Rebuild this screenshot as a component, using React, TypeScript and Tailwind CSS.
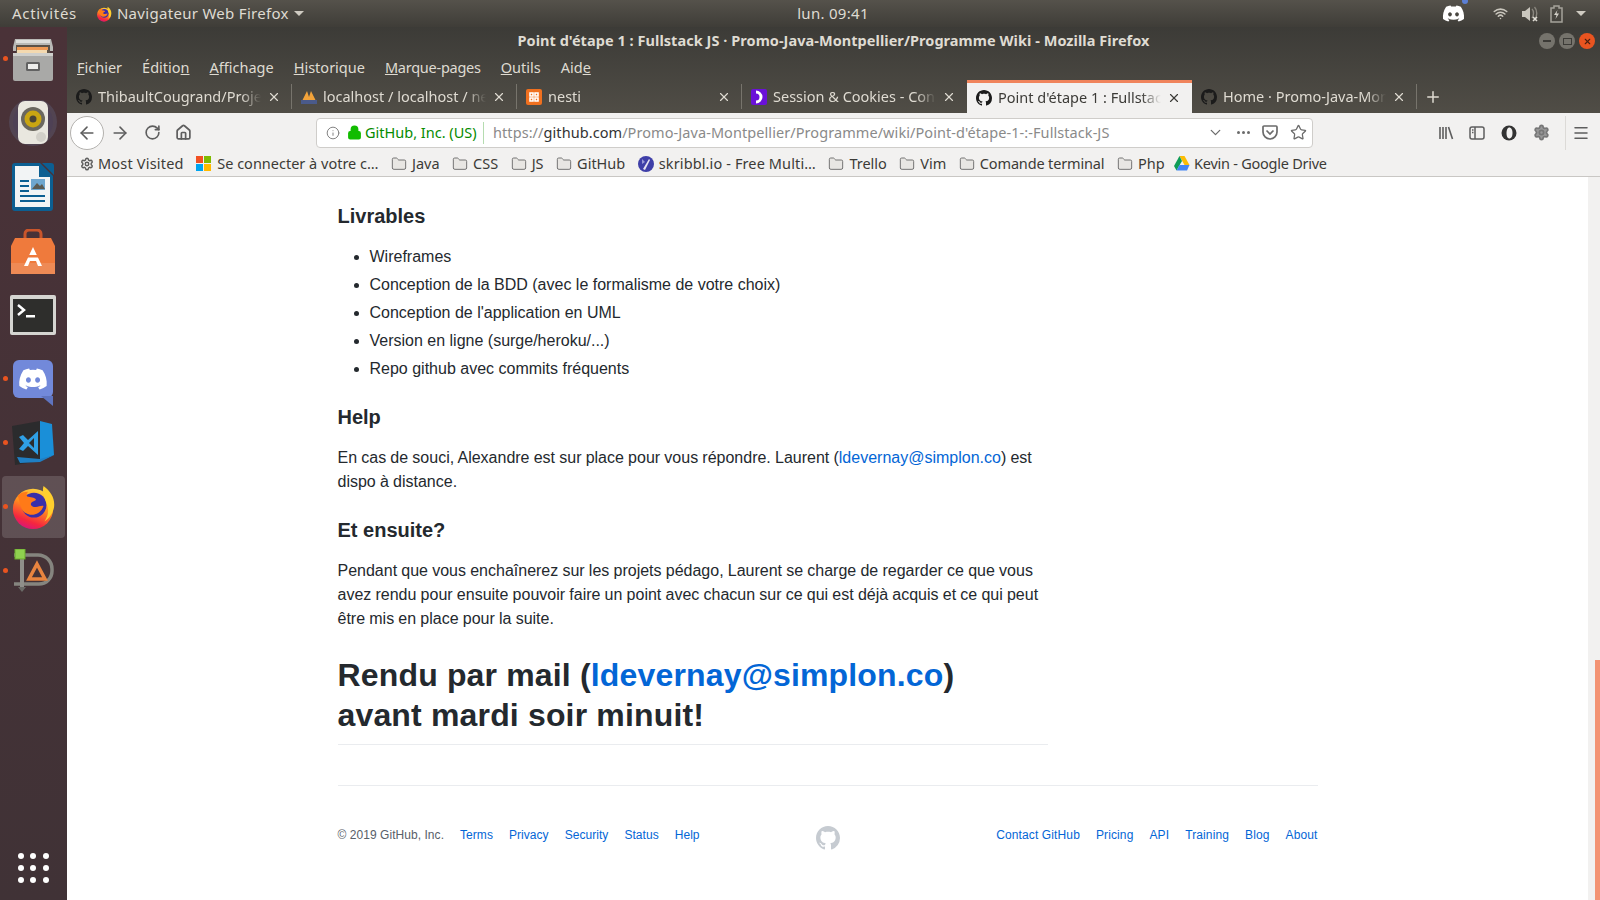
import { ArrowLeft, ArrowRight, ChevronDown, Folder, Home, Info, Lock, Menu, Plus, RotateCw, Settings, Star, Wifi, X } from "lucide-react";
import { FaDiscord } from "react-icons/fa";

const GITHUB_MARK =
  "M8 0C3.58 0 0 3.58 0 8c0 3.54 2.29 6.53 5.47 7.59.4.07.55-.17.55-.38 0-.19-.01-.82-.01-1.49-2.01.37-2.53-.49-2.69-.94-.09-.23-.48-.94-.82-1.13-.28-.15-.68-.52-.01-.53.63-.01 1.08.58 1.23.82.72 1.21 1.87.87 2.33.66.07-.52.28-.87.51-1.07-1.78-.2-3.64-.89-3.64-3.95 0-.87.31-1.59.82-2.15-.08-.2-.36-1.02.08-2.12 0 0 .67-.21 2.2.82.64-.18 1.32-.27 2-.27.68 0 1.36.09 2 .27 1.53-1.04 2.2-.82 2.2-.82.44 1.1.16 1.92.08 2.12.51.56.82 1.27.82 2.15 0 3.07-1.87 3.75-3.65 3.95.29.25.54.73.54 1.48 0 1.07-.01 1.93-.01 2.2 0 .21.15.46.55.38A8.013 8.013 0 0016 8c0-4.42-3.58-8-8-8z";

function GithubMark({ className }: { className: string }) {
  return (
    <svg viewBox="0 0 16 16" className={className} fill="currentColor">
      <path d={GITHUB_MARK} />
    </svg>
  );
}

function FirefoxIcon({ size }: { size: number }) {
  return (
    <svg width={size} height={size} viewBox="0 0 48 48">
      <defs>
        <linearGradient id={`ff${size}`} x1="0.7" y1="0" x2="0.3" y2="1">
          <stop offset="0" stopColor="#ffd53d" />
          <stop offset="0.45" stopColor="#ff8a1f" />
          <stop offset="0.8" stopColor="#f5263f" />
          <stop offset="1" stopColor="#d5157f" />
        </linearGradient>
      </defs>
      <circle cx="24" cy="26" r="21" fill={`url(#ff${size})`} />
      <circle cx="25" cy="22" r="13" fill="#3a2fa8" />
      <path d="M35 2c8 6 12 13 11 22-1 6-5 12-10 15 4-6 5-12 2-19-2-6-5-11-3-18z" fill="#ffcf2e" />
      <path d="M8 12c3-3 7-4 11-4-2 2-2 4-1 5 3 1 8 1 9 3 0 2-4 2-5 4-1 2 1 4 5 4 3 0 6-2 8-1-2 6-8 10-14 9-5-1-9-4-10-9-1-4-2-8-3-11z" fill="#ff7a18" />
    </svg>
  );
}

function FilesIcon() {
  return (
    <svg width="44" height="44" viewBox="0 0 44 44">
      <path d="M4 2h36l2 8v4H2v-4z" fill="#b9b9b6" />
      <path d="M5 3h34v3H5z" fill="#dededb" />
      <rect x="5" y="8" width="34" height="9" fill="#5b5147" />
      <rect x="6" y="10" width="31" height="3" fill="#ef9a55" />
      <rect x="6" y="13" width="30" height="3" fill="#f3d9b0" />
      <path d="M2 16h40v26a2 2 0 0 1-2 2H4a2 2 0 0 1-2-2z" fill="#a9a9a7" />
      <path d="M2 16h40v3H2z" fill="#cfcfcc" />
      <rect x="15" y="25" width="14" height="9" rx="1.5" fill="#626262" />
      <rect x="17" y="27" width="10" height="5" fill="#eeeeec" />
    </svg>
  );
}

function SpeakerIcon() {
  return (
    <svg width="50" height="46" viewBox="0 0 50 46">
      <circle cx="25" cy="22" r="24" fill="#5a5468" opacity="0.55" />
      <circle cx="25" cy="22" r="20" fill="#4c3f58" opacity="0.6" />
      <rect x="10" y="1" width="30" height="43" rx="7" fill="#e9e7df" />
      <circle cx="25" cy="19" r="12" fill="#6a675f" />
      <circle cx="25" cy="19" r="8.5" fill="#c9a512" />
      <circle cx="25" cy="19" r="3.5" fill="#4a4436" />
      <circle cx="33" cy="37" r="5" fill="#d2d0c9" />
    </svg>
  );
}

function WriterIcon() {
  return (
    <svg width="42" height="48" viewBox="0 0 42 48">
      <path d="M3 0h25l13 13v32a3 3 0 0 1-3 3H3a3 3 0 0 1-3-3V3a3 3 0 0 1 3-3z" fill="#0c5f92" />
      <path d="M3 3h24v11h11v30H3z" fill="#f2f4f5" />
      <path d="M30 0h9a3 3 0 0 1 3 3v9z" fill="#0c5f92" />
      <path d="M8 17h9v2H8zM8 22h9v2H8zM8 27h9v2H8zM8 32h25v2H8zM8 37h25v2H8z" fill="#0c5f92" />
      <rect x="19" y="16" width="14" height="11" fill="#6ea7cf" />
      <path d="M20 26l5-6 3 3 2-2 3 5z" fill="#5b5b52" />
    </svg>
  );
}

function StoreIcon() {
  return (
    <svg width="44" height="45" viewBox="0 0 44 45">
      <path d="M14 10V5a4 4 0 0 1 4-4h8a4 4 0 0 1 4 4v5" fill="none" stroke="#c9552b" strokeWidth="3" />
      <path d="M4 9h36l4 8v28H0V17z" fill="#ef7a3c" />
      <path d="M0 34h44v11H0z" fill="#ee8a55" />
      <path d="M22 18l-9 19h4l2-5h6l2 5h4z" fill="#fff" />
      <rect x="12" y="26" width="20" height="2.5" fill="#ef7a3c" />
    </svg>
  );
}

function TerminalIcon() {
  return (
    <svg width="46" height="40" viewBox="0 0 46 40">
      <rect width="46" height="40" rx="2" fill="#d5d5d1" />
      <rect x="3" y="4" width="40" height="33" fill="#2e2e2c" />
      <path d="M8 10l6 5-6 5" fill="none" stroke="#fff" strokeWidth="2.5" />
      <rect x="16" y="20" width="9" height="2.5" fill="#fff" />
    </svg>
  );
}

function VsCodeIcon() {
  return (
    <svg width="42" height="44" viewBox="0 0 42 44">
      <path d="M0 5l28-5v40L3 44z" fill="#2b2b2d" />
      <path d="M28 0l12 3 2 31-14 6z" fill="#1a8fd8" />
      <path d="M5 36l23 2 14-4-14 7-20 1z" fill="#1f7fc4" />
      <path d="M7 16l4-2 5 5 10-9v24L16 25l-5 5-4-2 5-6z" fill="#2f9fe5" />
      <path d="M22 17l-5 5 5 5z" fill="#2b2b2d" />
    </svg>
  );
}

function InkIcon() {
  return (
    <svg width="46" height="44" viewBox="0 0 46 44">
      <path d="M4 6h24a14 14 0 0 1 14 14v2a13 13 0 0 1-13 13H4" fill="none" stroke="#85857f" strokeWidth="3.5" />
      <rect x="10" y="6" width="4" height="34" fill="#8f8f8a" />
      <path d="M8 38h8l-4 5z" fill="#6a6a66" />
      <rect x="5" y="0" width="10" height="10" fill="#8fd14f" stroke="#6ba82e" />
      <path d="M27 15l8 15H19z" fill="none" stroke="#e8843f" strokeWidth="3.5" />
    </svg>
  );
}

const launcher = [
  { icon: <FilesIcon />, dot: true },
  { icon: <SpeakerIcon />, dot: false },
  { icon: <WriterIcon />, dot: false },
  { icon: <StoreIcon />, dot: false },
  { icon: <TerminalIcon />, dot: false },
  {
    icon: (
      <div className="relative flex h-[38px] w-[40px] items-center justify-center rounded-md bg-[#7289da]">
        <FaDiscord className="text-white" size={30} />
        <svg width="12" height="10" viewBox="0 0 12 10" className="absolute right-0 top-[36px]">
          <path d="M0 0h12v10z" fill="#5f74bf" />
        </svg>
      </div>
    ),
    dot: true,
  },
  { icon: <VsCodeIcon />, dot: true },
  { icon: <FirefoxIcon size={46} />, dot: true, active: true },
  { icon: <InkIcon />, dot: true },
];

function Launcher() {
  return (
    <aside className="flex w-[67px] shrink-0 flex-col bg-gradient-to-b from-[#4a3238] to-[#403236]">
      {launcher.map((item, i) => (
        <div key={i} className="relative flex h-16 items-center justify-center pr-[1px]">
          {item.active && <div className="absolute inset-x-[2px] inset-y-[1px] rounded bg-white/15" />}
          {item.dot && <div className="absolute left-[3px] top-[29px] h-[5px] w-[5px] rounded-full bg-[#e95420]" />}
          <div className="relative">{item.icon}</div>
        </div>
      ))}
      <div className="mt-auto grid h-16 grid-cols-3 content-center justify-center gap-[6px] px-[18px]">
        {Array.from({ length: 9 }).map((_, i) => (
          <div key={i} className="h-[6px] w-[6px] rounded-full bg-white" />
        ))}
      </div>
    </aside>
  );
}

function TopBar() {
  return (
    <header className="relative flex h-[27px] items-center bg-gradient-to-b from-[#55524b] to-[#3f3d38] pl-3 text-[15px] tracking-[0.3px] text-[#dfdbd2]">
      <span className="tracking-[0.7px]">Activités</span>
      <span className="ml-[19px]">
        <FirefoxIcon size={16} />
      </span>
      <span className="ml-[5px]">Navigateur Web Firefox</span>
      <span className="ml-[5px] h-0 w-0 border-x-[5px] border-t-[5px] border-x-transparent border-t-[#cfcbc2]" />
      <span className="absolute left-[793px] w-[80px] whitespace-nowrap text-center">lun. 09:41</span>
      <div className="ml-auto flex items-center">
        <div className="relative mr-[28px]">
          <FaDiscord className="text-white" size={23} />
          <div className="absolute right-[-3px] top-[-4px] h-[6px] w-[6px] rounded-full bg-[#5b7fd4]" />
        </div>
        <Wifi size={15} strokeWidth={2.5} className="mr-[13px] text-[#c9c6bd]" />
        <svg width="18" height="16" viewBox="0 0 18 16" className="mr-[11px]">
          <path d="M1 5h3l5-4v14l-5-4H1z" fill="#c9c6bd" />
          <path d="M11 3c2 2 2 6 0 9" fill="none" stroke="#8a877f" strokeWidth="1.4" />
          <path d="M13.5 1c3 3 3 9 0 13" fill="none" stroke="#8a877f" strokeWidth="1.4" />
          <path d="M12 11l4 4m0-4l-4 4" stroke="#e0ddd5" strokeWidth="1.6" />
        </svg>
        <svg width="13" height="18" viewBox="0 0 13 18" className="mr-[13px]">
          <path d="M4 1h5v2h3v14H1V3h3z" fill="none" stroke="#a5a29a" strokeWidth="1.5" />
          <path d="M7.5 5L4 10h2.5L5.5 14 9 8.5H6.5z" fill="#d5d2ca" />
        </svg>
        <span className="mr-[14px] h-0 w-0 border-x-[5px] border-t-[5px] border-x-transparent border-t-[#cfcbc2]" />
      </div>
    </header>
  );
}

function WindowButtons() {
  return (
    <div className="absolute right-[5px] top-[6px] flex gap-[4px]">
      <div className="flex h-4 w-4 items-center justify-center rounded-full bg-[#75736c]">
        <div className="h-[2px] w-2 bg-[#3c3b37]" />
      </div>
      <div className="flex h-4 w-4 items-center justify-center rounded-full bg-[#75736c]">
        <div className="h-[7px] w-[9px] border border-[#3c3b37]" />
      </div>
      <div className="flex h-4 w-4 items-center justify-center rounded-full bg-[#e95420]">
        <X size={9} strokeWidth={3} className="text-[#4a2010]" />
      </div>
    </div>
  );
}

function MenuBar() {
  return (
    <div className="flex h-[25px] items-center gap-5 pl-[10px] text-[14.5px] text-[#dfdbd2]">
      <span><u>F</u>ichier</span>
      <span>Éditio<u>n</u></span>
      <span><u>A</u>ffichage</span>
      <span><u>H</u>istorique</span>
      <span className="tracking-[-0.25px]"><u>M</u>arque-pages</span>
      <span><u>O</u>utils</span>
      <span>Aid<u>e</u></span>
    </div>
  );
}

const tabs = [
  { title: "ThibaultCougrand/Projet-Fil-Rouge", icon: <GithubMark className="h-4 w-4 text-[#1b1b1b]" /> },
  {
    title: "localhost / localhost / nesti",
    icon: (
      <svg width="16" height="16" viewBox="0 0 16 16">
        <path d="M1 12L6 2l2 6 2-6 5 10z" fill="#f2a33a" />
        <rect x="0" y="11" width="16" height="4" fill="#4a5a8a" />
      </svg>
    ),
  },
  {
    title: "nesti",
    icon: (
      <svg width="16" height="16" viewBox="0 0 16 16">
        <rect width="16" height="16" rx="2" fill="#f0701f" />
        <path d="M4 4h3v3H4zM9 4h3v3H9zM4 9h3v3H4zM9 9h3v3H9z" fill="none" stroke="#fff" strokeWidth="1.6" />
      </svg>
    ),
  },
  {
    title: "Session & Cookies - Concepts",
    icon: (
      <svg width="16" height="16" viewBox="0 0 16 16">
        <rect width="16" height="16" rx="2" fill="#6a11d8" />
        <path d="M5 3a5 5 0 0 1 0 10" fill="none" stroke="#fff" strokeWidth="3" />
      </svg>
    ),
  },
  { title: "Point d'étape 1 : Fullstack JS", icon: <GithubMark className="h-4 w-4 text-[#1b1b1b]" />, active: true },
  { title: "Home · Promo-Java-Montpellier", icon: <GithubMark className="h-4 w-4 text-[#1b1b1b]" /> },
];

function TabBar() {
  return (
    <div className="flex h-[33px] items-stretch">
      {tabs.map((tab, i) => (
        <div
          key={i}
          className={
            tab.active
              ? "flex w-[225px] items-center gap-[6px] border-t-[3px] border-t-[#f0845c] bg-[#f2f1f0] pl-[9px] pr-[11px] pb-[1px] text-[#3c3b37]"
              : "relative flex w-[225px] items-center gap-[6px] pl-[9px] pr-[11px] text-[#dfdbd2]"
          }
        >
          {tab.icon}
          <span className="flex-1 overflow-hidden whitespace-nowrap text-[14.5px] [mask-image:linear-gradient(to_right,black_88%,transparent)]">
            {tab.title}
          </span>
          <X size={14} strokeWidth={2} />
          {!tab.active && tabs[i + 1] && !tabs[i + 1].active && (
            <div className="absolute right-0 top-[4px] bottom-[4px] w-px bg-[#77746c]" />
          )}
          {i === tabs.length - 1 && <div className="absolute right-0 top-[4px] bottom-[4px] w-px bg-[#77746c]" />}
        </div>
      ))}
      <div className="flex items-center pl-[7px] text-[#dfdbd2]">
        <Plus size={18} strokeWidth={2} />
      </div>
    </div>
  );
}

function NavBar() {
  return (
    <div className="flex h-[37px] items-center bg-[#f2f1f0] pl-[3px] pt-[2px] text-[#5e5e5e]">
      <div className="flex h-[34px] w-[34px] items-center justify-center rounded-full border border-[#b3b1ae] bg-white">
        <ArrowLeft size={20} strokeWidth={1.9} />
      </div>
      <ArrowRight size={20} strokeWidth={1.9} className="ml-[6px]" />
      <RotateCw size={17} strokeWidth={2.3} className="ml-[14px]" />
      <Home size={17} strokeWidth={2.4} className="ml-[14px]" />
      <div className="ml-[124px] flex h-[30px] w-[997px] items-center rounded border border-[#cfcdca] bg-white pl-[9px] text-[14.5px]">
        <Info size={14} strokeWidth={1.6} className="text-[#7a7a7a]" />
        <Lock size={15} strokeWidth={2.5} className="ml-[7px] fill-[#12bc00] text-[#12bc00]" />
        <span className="ml-[3px] w-[112px] whitespace-nowrap text-[#058b00]">GitHub, Inc. (US)</span>
        <div className="ml-[6px] h-[22px] w-px bg-[#b5dcb0]" />
        <span className="ml-[9px] whitespace-nowrap tracking-[0.07px] text-[#8a8a8a]">
          https://<span className="text-[#333]">github.com</span>/Promo-Java-Montpellier/Programme/wiki/Point-d'étape-1-:-Fullstack-JS
        </span>
        <div className="ml-auto flex items-center text-[#6b6b6b]">
          <ChevronDown size={17} strokeWidth={1.8} />
          <div className="ml-[13px] flex gap-[2px]">
            <div className="h-[3px] w-[3px] rounded-full bg-[#6b6b6b]" />
            <div className="h-[3px] w-[3px] rounded-full bg-[#6b6b6b]" />
            <div className="h-[3px] w-[3px] rounded-full bg-[#6b6b6b]" />
          </div>
          <svg width="16" height="15" viewBox="0 0 16 15" className="ml-[12px]" fill="none" stroke="#6b6b6b" strokeWidth="1.7">
            <path d="M2 1h12a1 1 0 0 1 1 1v5a7 7 0 0 1-14 0V2a1 1 0 0 1 1-1z" />
            <path d="M4.5 5.5L8 9l3.5-3.5" />
          </svg>
          <Star size={17} strokeWidth={1.8} className="ml-[12px] mr-[5px]" />
        </div>
      </div>
      <svg width="16" height="16" viewBox="0 0 16 16" className="ml-[125px]" stroke="#5e5e5e" strokeWidth="1.6" fill="none">
        <path d="M2 2v12M5 2v12M8 2v12M10.5 2l4 12" />
      </svg>
      <svg width="16" height="14" viewBox="0 0 16 14" className="ml-[15px]" stroke="#5e5e5e" strokeWidth="1.5" fill="none">
        <rect x="1" y="1" width="14" height="12" rx="2" />
        <path d="M6 1v12M3 4h1.5M3 6.5h1.5" />
      </svg>
      <svg width="16" height="16" viewBox="0 0 16 16" className="ml-[16px]">
        <circle cx="8" cy="8" r="7.5" fill="#333" />
        <path d="M8 2.5c2.5 0 3.5 2.5 3.5 5.5s-1 5.5-3.5 5.5c-1.5 0-2.5-2.5-2.5-5.5s1-5.5 2.5-5.5z" fill="#f2f1f0" />
      </svg>
      <Settings size={17} strokeWidth={2.5} className="ml-[16px] fill-[#999] text-[#777]" />
      <div className="ml-[15px] h-[34px] w-px bg-[#dcdad7]" />
      <Menu size={18} strokeWidth={2} className="ml-[6px]" />
    </div>
  );
}

const bookmarks = ["Java", "CSS", "JS", "GitHub"];
const bookmarksEnd = ["Trello", "Vim", "Comande terminal", "Php"];

function BookmarkFolder({ label }: { label: string }) {
  return (
    <span className={label === "Comande terminal" ? "flex items-center gap-[5px] tracking-[-0.15px]" : "flex items-center gap-[5px]"}>
      <Folder size={16} strokeWidth={1.4} className="fill-[#e8e6e3] text-[#6b6b6b]" />
      {label}
    </span>
  );
}

function BookmarksBar() {
  return (
    <div className="flex h-[27px] items-center gap-[12.5px] border-b border-[#c9c7c4] bg-[#f2f1f0] pl-[13px] pt-[1px] text-[14.5px] text-[#3c3b37]">
      <span className="flex items-center gap-[4px] tracking-[0.2px]">
        <Settings size={14} strokeWidth={2.5} className="text-[#5e5e5e]" />
        Most Visited
      </span>
      <span className="flex items-center gap-[6px]">
        <span className="grid h-[15px] w-[15px] grid-cols-2 gap-px">
          <span className="bg-[#f25022]" />
          <span className="bg-[#7fba00]" />
          <span className="bg-[#00a4ef]" />
          <span className="bg-[#ffb900]" />
        </span>
        Se connecter à votre c…
      </span>
      {bookmarks.map((b) => (
        <BookmarkFolder key={b} label={b} />
      ))}
      <span className="flex items-center gap-[5px] tracking-[0.12px]">
        <svg width="16" height="16" viewBox="0 0 16 16">
          <circle cx="8" cy="8" r="8" fill="#3f3fa8" />
          <path d="M5 13l6-10 1 1-5 10z" fill="#e8e4f2" />
          <path d="M4 3l3 3-3 2z" fill="#9a9ad8" />
        </svg>
        skribbl.io - Free Multi…
      </span>
      {bookmarksEnd.map((b) => (
        <BookmarkFolder key={b} label={b} />
      ))}
      <span className="-ml-[3px] flex items-center gap-[4px] tracking-[-0.25px]">
        <svg width="16" height="15" viewBox="0 0 16 15">
          <path d="M5.5 0h5l5 9h-5z" fill="#fbbc04" />
          <path d="M5.5 0L0 10l2.5 4.5L8 5z" fill="#0f9d58" />
          <path d="M2.5 14.5h10.5L15.5 9H5.5z" fill="#4285f4" />
        </svg>
        Kevin - Google Drive
      </span>
    </div>
  );
}

function WikiBody() {
  return (
    <div className="w-[710px] border-b border-[#eaecef] pb-[9px] text-[16px] leading-6 text-[#24292e]">
      <h3 className="mb-4 text-[20px] font-semibold leading-[25px]">Livrables</h3>
      <ul className="list-disc pl-8">
        <li>Wireframes</li>
        <li className="mt-1">Conception de la BDD (avec le formalisme de votre choix)</li>
        <li className="mt-1">Conception de l'application en UML</li>
        <li className="mt-1">Version en ligne (surge/heroku/...)</li>
        <li className="mt-1">Repo github avec commits fréquents</li>
      </ul>
      <h3 className="mb-4 mt-6 text-[20px] font-semibold leading-[25px]">Help</h3>
      <p className="[word-spacing:-0.25px]">
        En cas de souci, Alexandre est sur place pour vous répondre. Laurent (
        <a className="text-[#0366d6]">ldevernay@simplon.co</a>) est dispo à distance.
      </p>
      <h3 className="mb-4 mt-6 text-[20px] font-semibold leading-[25px]">Et ensuite?</h3>
      <p className="[word-spacing:-0.25px]">
        Pendant que vous enchaînerez sur les projets pédago, Laurent se charge de regarder ce que vous avez rendu pour ensuite pouvoir faire un point avec chacun sur ce qui est déjà acquis et ce qui peut être mis en place pour la suite.
      </p>
      <h1 className="mt-6 text-[32px] font-semibold leading-10 tracking-[0.16px]">
        Rendu par mail (<a className="text-[#0366d6]">ldevernay@simplon.co</a>)
        <br />
        avant mardi soir minuit!
      </h1>
    </div>
  );
}

function Footer() {
  return (
    <footer className="mt-10 grid grid-cols-[1fr_auto_1fr] border-t border-[#eaecef] pt-10 text-[12px] leading-[18px]">
      <div className="flex gap-4 tracking-[0.05px] text-[#0366d6]">
        <span className="text-[#586069]">© 2019 GitHub, Inc.</span>
        <a>Terms</a>
        <a>Privacy</a>
        <a>Security</a>
        <a>Status</a>
        <a>Help</a>
      </div>
      <GithubMark className="h-6 w-6 text-[#c6cbd1]" />
      <div className="flex justify-end gap-4 tracking-[0.12px] text-[#0366d6]">
        <a>Contact GitHub</a>
        <a>Pricing</a>
        <a>API</a>
        <a>Training</a>
        <a>Blog</a>
        <a>About</a>
      </div>
    </footer>
  );
}

export default function App() {
  return (
    <div className="flex h-screen flex-col overflow-hidden bg-white font-['Noto_Sans',sans-serif]">
      <TopBar />
      <div className="flex min-h-0 flex-1">
        <Launcher />
        <div className="flex min-w-0 flex-1 flex-col">
          <div className="relative bg-gradient-to-b from-[#3c3b37] to-[#504d46]">
            <div className="flex h-[28px] items-center justify-center text-[14.5px] font-bold tracking-[0.05px] text-[#dfdbd2]">
              Point d'étape 1 : Fullstack JS · Promo-Java-Montpellier/Programme Wiki - Mozilla Firefox
            </div>
            <WindowButtons />
            <MenuBar />
            <TabBar />
          </div>
          <NavBar />
          <BookmarksBar />
          <div className="flex min-h-0 flex-1">
            <main className="min-w-0 flex-1 font-['Liberation_Sans',sans-serif]">
              <div className="mx-auto w-[980px] pt-[27px]">
                <WikiBody />
                <Footer />
              </div>
            </main>
            <div className="flex w-[12px] flex-col justify-end bg-[#f2f1f0]">
              <div className="ml-[7px] h-[240px] w-[5px] bg-[#f39373]" />
            </div>
          </div>
        </div>
      </div>
    </div>
  );
}
